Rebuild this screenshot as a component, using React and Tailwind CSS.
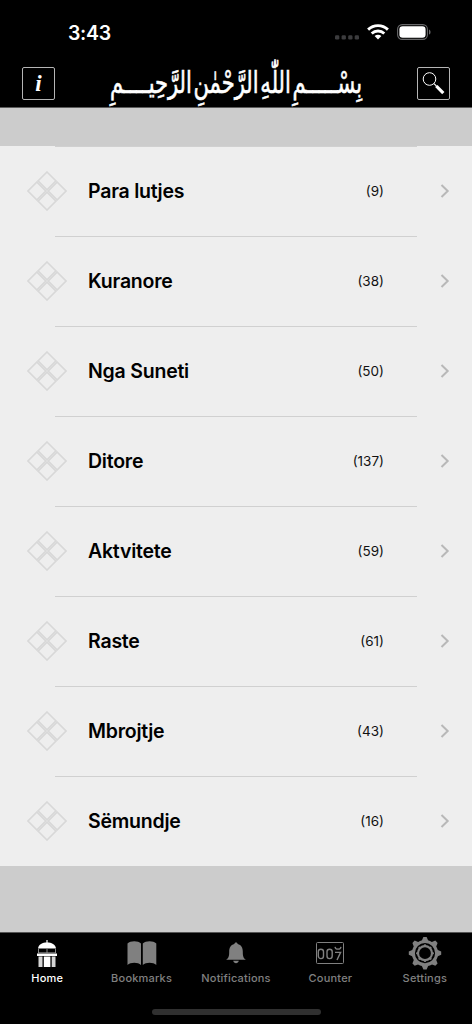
import { clsx } from "clsx"

const categories = [
  { name: "Para lutjes", count: 9 },
  { name: "Kuranore", count: 38 },
  { name: "Nga Suneti", count: 50 },
  { name: "Ditore", count: 137 },
  { name: "Aktvitete", count: 59 },
  { name: "Raste", count: 61 },
  { name: "Mbrojtje", count: 43 },
  { name: "Sëmundje", count: 16 },
]

const StatusBar = () => (
  <div className="flex h-[63px] items-start justify-between pl-[68px] pr-[41px]">
    <span className="mt-5 text-[19.5px] leading-[27px] font-semibold tracking-[-0.3px]">3:43</span>
    <div className="mt-6 flex">
      <svg width="24" height="16" viewBox="0 0 24 16" fill="#3c3c3e">
        <rect y="11.3" width="4.3" height="4.2" rx="1.3" />
        <rect x="6.6" y="11.3" width="4.3" height="4.2" rx="1.3" />
        <rect x="13.2" y="11.3" width="4.3" height="4.2" rx="1.3" />
        <rect x="19.7" y="11.3" width="4.3" height="4.2" rx="1.3" />
      </svg>
      <svg className="ml-2" width="22" height="16" viewBox="0 0 22 16" fill="none" stroke="#fff" strokeWidth="2.9">
        <path d="M1.1 5.6C6.7.3 15.3.3 20.9 5.6" />
        <path d="M4.7 9.5C8.3 6.2 13.7 6.2 17.3 9.5" />
        <path d="M11 15.4L7.6 12.1C9.7 10.3 12.3 10.3 14.4 12.1Z" fill="#fff" stroke="none" />
      </svg>
      <svg className="ml-2" width="34" height="16" viewBox="0 0 34 16">
        <rect x=".6" y=".6" width="29.8" height="14.8" rx="4.6" fill="none" stroke="#68686a" strokeWidth="1.1" />
        <rect x="2.4" y="2.3" width="26.2" height="11.4" rx="3.2" fill="#fff" />
        <path d="M32 5.4C34 6.2 34 9.8 32 10.6Z" fill="#68686a" />
      </svg>
    </div>
  </div>
)

const Basmala = () => (
  <svg className="overflow-visible" width="254" height="44" viewBox="0 0 254 44">
    <text
      x="127"
      y="30"
      textAnchor="middle"
      direction="rtl"
      fill="#fff"
      stroke="#fff"
      strokeWidth=".6"
      fontSize="30"
      textLength="252"
      lengthAdjust="spacingAndGlyphs"
      className="font-['DejaVu_Sans',sans-serif] [word-spacing:-7px]"
    >
      بِسْـــــمِ اللّٰهِ الرَّحْمٰنِ الرَّحِيــــمِ
    </text>
  </svg>
)

const Header = () => (
  <header className="h-[108px] shrink-0 border-b border-[#5c5c5c] bg-black text-white">
    <StatusBar />
    <div className="flex h-[44px] items-start justify-between px-[22px]">
      <button className="mt-1 flex h-[33px] w-[33px] items-center justify-center rounded-[2px] border border-[#b5b5b5]">
        <span className="font-['Liberation_Serif',serif] text-[23px] leading-none font-bold italic">i</span>
      </button>
      <Basmala />
      <button className="mt-1 flex h-[33px] w-[33px] items-center justify-center rounded-[2px] border border-[#b5b5b5]">
        <svg width="31" height="31" viewBox="0 0 31 31" fill="none" stroke="#fff">
          <circle cx="11.5" cy="11" r="6.3" strokeWidth="1" />
          <path d="M16 15.7L18.5 18.2" strokeWidth="1.2" />
          <path d="M18.3 18L25.3 25.2" strokeWidth="3.2" />
        </svg>
      </button>
    </div>
  </header>
)

const DiamondIcon = () => (
  <svg className="-mt-[2px]" width="40" height="40" viewBox="0 0 40 40" fill="none" stroke="#d8d8d8">
    <path d="M20 1L39 20L20 39L1 20Z" strokeWidth="1.6" />
    <path d="M10.5 10.5L29.5 29.5M29.5 10.5L10.5 29.5" strokeWidth="3.2" />
    <path d="M10.5 10.5L29.5 29.5M29.5 10.5L10.5 29.5" stroke="#e3e3e3" strokeWidth=".6" />
  </svg>
)

const CategoryRow = ({ name, count }) => (
  <li className="flex h-[90px] flex-col">
    <div className="mx-[55px] h-px bg-[#d0d0d0]" />
    <div className="flex flex-1 items-center pr-[22px] pl-[27px]">
      <DiamondIcon />
      <span className="ml-[21px] flex-1 text-[19.5px] font-semibold tracking-[-0.22px] text-black">{name}</span>
      <span className="text-[13.5px] text-[#111]">({count})</span>
      <svg className="-mt-px ml-14" width="10" height="14" viewBox="0 0 10 14" fill="none" stroke="#b8b8b8" strokeWidth="2">
        <path d="M1.5 1L7.7 7L1.5 13" />
      </svg>
    </div>
  </li>
)

const HomeIcon = () => (
  <svg width="34" height="38" viewBox="0 0 34 38" fill="#fff">
    <path d="M16.4 6H17.6V9.5H16.4Z" />
    <path d="M8 14.5C8.5 10.3 12.5 8.5 17 8.5S25.5 10.3 26 14.5Z" />
    <path d="M8 15H9V19H8ZM16.5 15H17.5V19H16.5ZM25 15H26V19H25Z" fill="#888" />
    <path d="M8 18.4H26V19.2H8Z" fill="#999" />
    <path d="M7 19.5H27V22H7Z" />
    <path d="M8.5 22.5H12.5V33H8.5ZM21.7 22.5H25.5V33H21.7Z" fill="#d5d5d5" />
    <path d="M13.8 22.5H20.4V33H13.8Z" />
  </svg>
)

const BookIcon = () => (
  <svg width="34" height="38" viewBox="0 0 34 38" fill="#808080">
    <path d="M2.5 9.5C5.5 6.5 13 6.5 16 9.5V31C13 28 5.5 28 2.5 31Z" />
    <path d="M17.8 9.5C20.8 6.5 28.3 6.5 31.3 9.5V31C28.3 28 20.8 28 17.8 31Z" />
  </svg>
)

const BellIcon = () => (
  <svg width="34" height="38" viewBox="0 0 34 38" fill="#808080">
    <path d="M17 8.5C18 8.5 18.5 9.1 18.7 10C22.3 10.8 23.8 13.8 23.8 17.8C23.8 22.5 24.4 24 26.8 25.8H7.2C9.6 24 10.2 22.5 10.2 17.8C10.2 13.8 11.7 10.8 15.3 10C15.5 9.1 16 8.5 17 8.5Z" />
    <path d="M14.2 26.8H19.8C19.3 29.9 14.7 29.9 14.2 26.8Z" />
  </svg>
)

const CounterIcon = () => (
  <svg width="34" height="38" viewBox="0 0 34 38" fill="none" stroke="#808080">
    <rect x="3.5" y="8.5" width="27" height="21" rx="1" strokeWidth="1" />
    <rect x="5.3" y="15.2" width="5.2" height="9.4" rx="2.6" strokeWidth="1.4" />
    <rect x="14" y="15.2" width="5.2" height="9.4" rx="2.6" strokeWidth="1.4" />
    <path d="M22 18.4H27.6L24 26" strokeWidth="1.4" />
    <path d="M22 12.8C22.6 16 27.4 16 28 12.8" strokeWidth="1.3" />
  </svg>
)

const teeth = [0, 45, 90, 135, 180, 225, 270, 315]

const GearIcon = () => (
  <svg width="34" height="38" viewBox="0 0 34 38" fill="none" stroke="#808080">
    <circle cx="17" cy="19.2" r="11.6" strokeWidth="3" />
    <circle cx="17" cy="19.2" r="7" strokeWidth="2.2" />
    {teeth.map((angle) => (
      <g key={angle} transform={`rotate(${angle} 17 19.2)`} fill="#808080" stroke="none">
        <path d="M13.4 7.5L15.4 3H18.6L20.6 7.5Z" />
        <circle cx="17" cy="11.6" r="1.3" />
      </g>
    ))}
  </svg>
)

const tabs = [
  { label: "Home", icon: HomeIcon, active: true },
  { label: "Bookmarks", icon: BookIcon },
  { label: "Notifications", icon: BellIcon },
  { label: "Counter", icon: CounterIcon },
  { label: "Settings", icon: GearIcon },
]

const TabBar = () => (
  <nav className="flex h-[92px] shrink-0 flex-col items-center border-t border-[#555] bg-black">
    <div className="flex w-full flex-1">
      {tabs.map(({ label, icon: Icon, active }) => (
        <button key={label} className="flex flex-1 flex-col items-center pt-px">
          <Icon />
          <span className={clsx("-mt-px text-[11px] leading-[14px] font-medium tracking-[0.2px]", active ? "text-white" : "text-[#808080]")}>
            {label}
          </span>
        </button>
      ))}
    </div>
    <div className="mb-[9px] h-[6px] w-[169px] rounded-full bg-[#303030]" />
  </nav>
)

export default function App() {
  return (
    <div className="flex h-[1024px] w-[472px] flex-col overflow-hidden bg-[#cccccc] font-[Inter,sans-serif]">
      <Header />
      <main className="flex-1 pt-[38px]">
        <ul className="bg-[#eeeeee]">
          {categories.map((item) => (
            <CategoryRow key={item.name} {...item} />
          ))}
        </ul>
      </main>
      <TabBar />
    </div>
  )
}
